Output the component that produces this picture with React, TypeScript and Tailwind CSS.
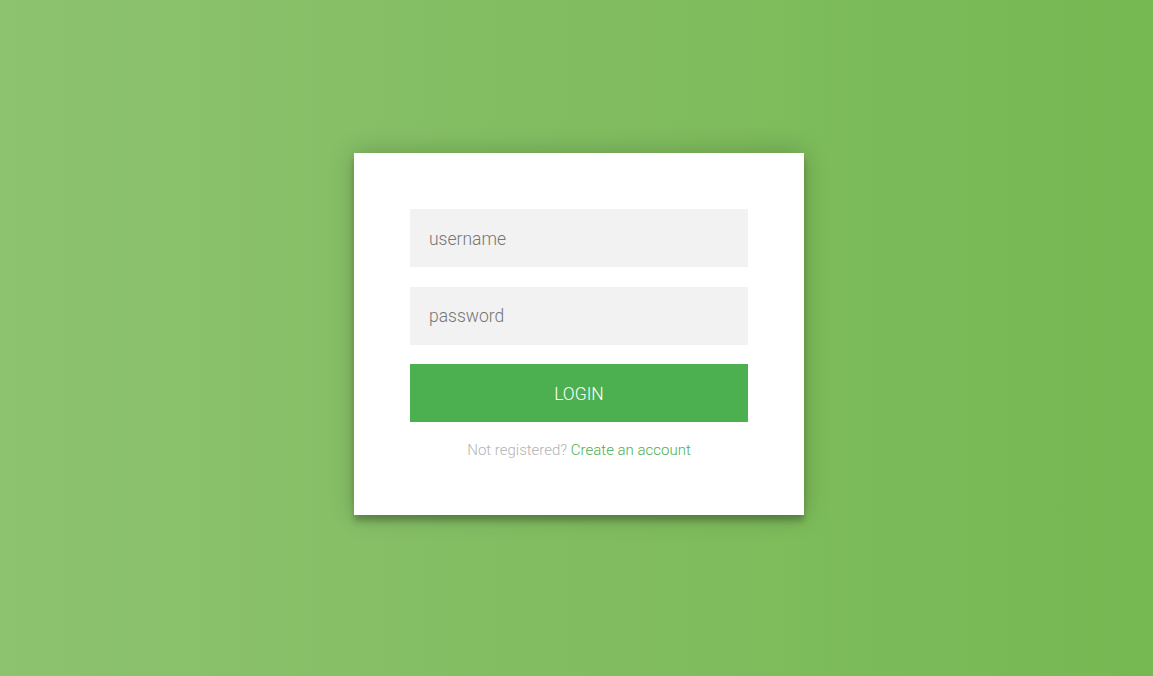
export default function App() {
  return (
    <div className="h-[676px] w-full overflow-hidden flex justify-center pl-[5px] pt-[153px] bg-[linear-gradient(to_left,#76b852,#8DC26F)] font-['Roboto','Liberation_Sans',sans-serif]">
      <form
        className="w-[450px] h-[362px] bg-white px-[56px] pt-[56px] flex flex-col shadow-[0_0_25px_0_rgba(0,0,0,0.2),0_6px_6px_0_rgba(0,0,0,0.24)]"
        onSubmit={(e) => e.preventDefault()}
      >
        <input
          type="text"
          placeholder="username"
          className="h-[58px] w-full shrink-0 bg-[#f2f2f2] px-[19px] pt-[2px] text-[17.5px] font-light text-[#333] outline-none placeholder:text-[#757575]"
        />
        <input
          type="password"
          placeholder="password"
          className="mt-[20px] h-[58px] w-full shrink-0 bg-[#f2f2f2] px-[19px] text-[17.5px] font-light text-[#333] outline-none placeholder:text-[#757575]"
        />
        <button
          type="submit"
          className="mt-[19px] h-[58px] w-full shrink-0 bg-[#4CAF50] pt-[2px] text-[17.5px] font-light uppercase text-white"
        >
          login
        </button>
        <p className="mt-[18px] text-center text-[15px] font-light leading-[20px] text-[#b3b3b3]">
          Not registered? <a href="#" className="text-[#4CAF50]">Create an account</a>
        </p>
      </form>
    </div>
  );
}
